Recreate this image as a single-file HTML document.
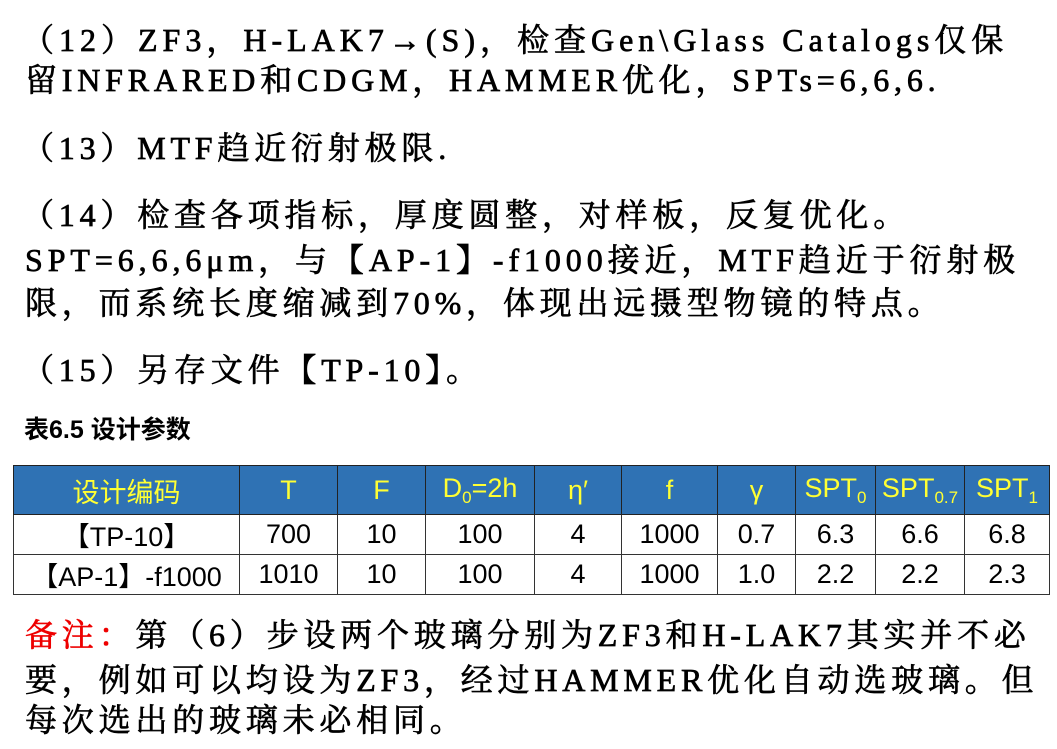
<!DOCTYPE html>
<html><head><meta charset="utf-8"><style>
body{margin:0;width:1057px;height:749px;background:#fff;overflow:hidden;position:relative;font-family:"Liberation Serif","Noto Serif CJK SC",serif;color:#000}
.l{position:absolute;white-space:nowrap;font-size:32px;line-height:40px;-webkit-text-stroke:0.7px #000;letter-spacing:4.8px}
.cap{position:absolute;left:24px;top:412px;font-family:"Liberation Sans","Noto Sans CJK SC",sans-serif;font-weight:bold;font-size:25px;line-height:36px}
table{position:absolute;left:13px;top:465px;border-collapse:collapse;font-family:"Liberation Sans Narrow","Liberation Sans","Noto Sans CJK SC",sans-serif;font-size:27px}
td{border:1px solid #333;text-align:center;padding:0}
tr.h td{background:#2f72b4;color:#ffff33;height:48px;border-color:#222}
tr.r td{height:37px}
.red{color:#e00;-webkit-text-stroke:0.7px #e00}
sub{font-size:17px;vertical-align:-6px}
</style></head><body>
<div class="l" style="left:22px;top:20px;letter-spacing:5px">（12）ZF3，H-LAK7→(S)，检查Gen\Glass Catalogs仅保</div>
<div class="l" style="left:25px;top:60px">留INFRARED和CDGM，HAMMER优化，SPTs=6,6,6.</div>
<div class="l" style="left:22px;top:128px">（13）MTF趋近衍射极限.</div>
<div class="l" style="left:22px;top:195px">（14）检查各项指标，厚度圆整，对样板，反复优化。</div>
<div class="l" style="left:25px;top:240px;letter-spacing:4.9px">SPT=6,6,6μm，与【AP-1】-f1000接近，MTF趋近于衍射极</div>
<div class="l" style="left:25px;top:283px;letter-spacing:4.8px">限，而系统长度缩减到70%，体现出远摄型物镜的特点。</div>
<div class="l" style="left:22px;top:350px">（15）另存文件【TP-10】。</div>
<div class="cap">表6.5 设计参数</div>
<table>
<tr class="h"><td style="width:225px">设计编码</td><td style="width:97px">T</td><td style="width:87px">F</td><td style="width:108px">D<sub>0</sub>=2h</td><td style="width:86px">η′</td><td style="width:95px">f</td><td style="width:77px">γ</td><td style="width:79px">SPT<sub>0</sub></td><td style="width:88px">SPT<sub>0.7</sub></td><td style="width:84px">SPT<sub>1</sub></td></tr>
<tr class="r"><td>【TP-10】</td><td>700</td><td>10</td><td>100</td><td>4</td><td>1000</td><td>0.7</td><td>6.3</td><td>6.6</td><td>6.8</td></tr>
<tr class="r"><td>【AP-1】-f1000</td><td>1010</td><td>10</td><td>100</td><td>4</td><td>1000</td><td>1.0</td><td>2.2</td><td>2.2</td><td>2.3</td></tr>
</table>
<div class="l" style="left:25px;top:615px"><span class="red">备注：</span>第（6）步设两个玻璃分别为ZF3和H-LAK7其实并不必</div>
<div class="l" style="left:25px;top:660px">要，例如可以均设为ZF3，经过HAMMER优化自动选玻璃。但</div>
<div class="l" style="left:25px;top:700px">每次选出的玻璃未必相同。</div>
</body></html>
